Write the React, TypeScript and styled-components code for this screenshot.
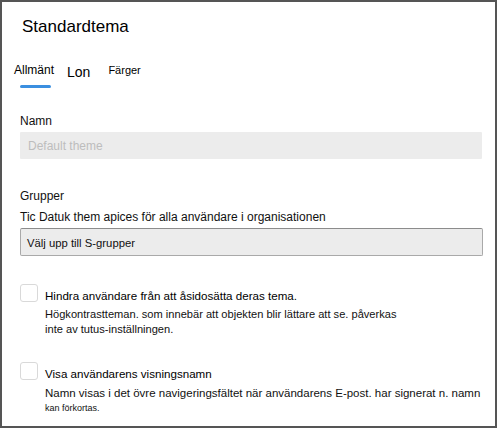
import React from "react";
import styled, { createGlobalStyle } from "styled-components";

const Global = createGlobalStyle`
  html, body { margin: 0; padding: 0; background: #fff; }
  body { font-family: "Liberation Sans", Arial, sans-serif; color: #000; }
  * { box-sizing: border-box; }
`;

const Frame = styled.div`
  width: 497px;
  height: 428px;
  border: 2px solid #555;
  padding: 0 13px 0 18px;
  display: flex;
  flex-direction: column;
  background: #fff;
`;

const Title = styled.h1`
  margin: 15px 0 0 2px;
  font-size: 17px;
  line-height: 20px;
  font-weight: 400;
  color: #000;
`;

const TabBar = styled.div`
  display: flex;
  align-items: flex-start;
  margin: 24.5px 0 0 -6px;
  height: 26px;
`;

const Tab = styled.div<{ $size: number; $top: number; $gapAfter: number; $active?: boolean }>`
  position: relative;
  font-size: ${(p) => p.$size}px;
  line-height: 16px;
  padding-top: ${(p) => p.$top}px;
  margin-right: ${(p) => p.$gapAfter}px;
  color: #000;
  &::after {
    content: "";
    display: ${(p) => (p.$active ? "block" : "none")};
    position: absolute;
    left: 6px;
    top: 23px;
    width: 31px;
    height: 3px;
    border-radius: 2px;
    background: #3b8fe0;
  }
`;

const Label = styled.div<{ $top: number }>`
  margin-top: ${(p) => p.$top}px;
  font-size: 12px;
  line-height: 16px;
  color: #111;
`;

const TextInput = styled.div`
  margin-top: 3px;
  width: 462px;
  height: 27px;
  background: #ececec;
  border-radius: 1px;
  display: flex;
  align-items: center;
  padding-left: 8px;
  font-size: 12px;
  color: #bdbdbd;
`;

const Select = styled.div`
  margin-top: 3px;
  width: 463px;
  height: 28px;
  background: #ececec;
  border: 1px solid #a9a9a9;
  border-top-color: #8c8c8c;
  border-radius: 2px;
  display: flex;
  align-items: center;
  padding: 1px 0 0 6px;
  font-size: 11.3px;
  color: #111;
`;

const CheckRow = styled.div<{ $top: number }>`
  display: flex;
  align-items: flex-start;
  margin-top: ${(p) => p.$top}px;
`;

const Box = styled.div`
  flex: none;
  width: 18px;
  height: 18px;
  border: 1.5px solid #d9d9d9;
  border-radius: 3px;
  background: #fff;
`;

const CheckText = styled.div`
  margin-left: 7px;
  display: flex;
  flex-direction: column;
  padding-top: 4px;
`;

const CheckTitle = styled.div`
  font-size: 11.6px;
  line-height: 16px;
  color: #000;
`;

const Hint = styled.div<{ $size: number; $lh: number; $top?: number }>`
  margin-top: ${(p) => p.$top ?? 0}px;
  font-size: ${(p) => p.$size}px;
  line-height: ${(p) => p.$lh}px;
  color: #111;
`;

export default function App() {
  return (
    <>
      <Global />
      <Frame>
        <Title>Standardtema</Title>
        <TabBar>
          <Tab $size={12} $top={0} $gapAfter={13} $active>
            Allmänt
          </Tab>
          <Tab $size={14} $top={2} $gapAfter={18}>
            Lon
          </Tab>
          <Tab $size={11} $top={0} $gapAfter={0}>
            Färger
          </Tab>
        </TabBar>
        <Label $top={25.5}>Namn</Label>
        <TextInput>Default theme</TextInput>
        <Label $top={29}>Grupper</Label>
        <Label $top={5}>Tic Datuk them apices för alla användare i organisationen</Label>
        <Select>Välj upp till S-grupper</Select>
        <CheckRow $top={28}>
          <Box />
          <CheckText>
            <CheckTitle>Hindra användare från att åsidosätta deras tema.</CheckTitle>
            <Hint $size={11.1} $lh={15} $top={3}>
              Högkontrastteman. som innebär att objekten blir lättare att se. påverkas
            </Hint>
            <Hint $size={11.1} $lh={15}>inte av tutus-inställningen.</Hint>
          </CheckText>
        </CheckRow>
        <CheckRow $top={25}>
          <Box />
          <CheckText>
            <CheckTitle>Visa användarens visningsnamn</CheckTitle>
            <Hint $size={11.5} $lh={16} $top={3}>
              Namn visas i det övre navigeringsfältet när användarens E-post. har signerat n. namn
            </Hint>
            <Hint $size={9} $lh={14}>kan förkortas.</Hint>
          </CheckText>
        </CheckRow>
      </Frame>
    </>
  );
}
